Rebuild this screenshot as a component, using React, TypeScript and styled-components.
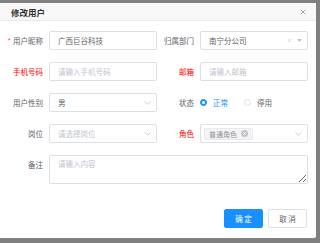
import React from "react";
import styled, { createGlobalStyle } from "styled-components";

const GlobalStyle = createGlobalStyle`
	html, body {
		margin: 0;
		padding: 0;
		background: #808080;
	}
	* {
		box-sizing: border-box;
	}
	body {
		font-family: "Noto Sans CJK SC", "Noto Sans", sans-serif;
	}
`;

const Mask = styled.div`
	width: 320px;
	height: 243px;
	padding-top: 3px;
	background: #808080;
	overflow: hidden;
`;

const Dialog = styled.div`
	width: 316px;
	height: 235px;
	background: #fff;
	display: flex;
	flex-direction: column;
	border-radius: 0 0 2px 0;
`;

const Header = styled.div`
	height: 18px;
	background: #f8f8f9;
	border-bottom: 1px solid #e8eaec;
	display: flex;
	align-items: center;
	justify-content: space-between;
	padding: 0 10px 0 11px;
	& .title {
		font-size: 8.5px;
		font-weight: 700;
		color: #303133;
	}
`;

const Body = styled.div`
	padding: 10px 8px 0 6px;
	display: grid;
	grid-template-columns: 1fr 1fr;
	row-gap: 12px;
`;

const Item = styled.div<{ $full?: boolean }>`
	display: flex;
	align-items: flex-start;
	grid-column: ${(p) => (p.$full ? "1 / -1" : "auto")};
`;

const Label = styled.label<{ $red?: boolean }>`
	width: 43px;
	flex-shrink: 0;
	padding-right: 6px;
	text-align: right;
	font-size: 7.5px;
	line-height: 19px;
	white-space: nowrap;
	color: ${(p) => (p.$red ? "#ff0000" : "#606266")};
	& .star {
		color: #ff4949;
		margin-right: 2px;
	}
`;

const TextInput = styled.input`
	flex: 1;
	min-width: 0;
	height: 19px;
	border: 1px solid #dcdfe6;
	border-radius: 2px;
	padding: 0 8px;
	font-family: inherit;
	font-size: 7.5px;
	color: #606266;
	outline: none;
	&::placeholder {
		color: #c0c4cc;
	}
`;

const Select = styled.div<{ $placeholder?: boolean }>`
	flex: 1;
	min-width: 0;
	height: 19px;
	border: 1px solid #dcdfe6;
	border-radius: 2px;
	padding: 0 5px 0 8px;
	display: flex;
	align-items: center;
	font-size: 7.5px;
	color: ${(p) => (p.$placeholder ? "#c0c4cc" : "#606266")};
	& .value {
		flex: 1;
		display: flex;
		align-items: center;
	}
	& .icons {
		display: flex;
		align-items: center;
		gap: 5px;
	}
`;

const TextArea = styled.textarea`
	flex: 1;
	height: 29px;
	border: 1px solid #dcdfe6;
	border-radius: 2px;
	padding: 2px 8px;
	font-family: inherit;
	font-size: 7.5px;
	line-height: 11px;
	color: #606266;
	resize: vertical;
	outline: none;
	&::placeholder {
		color: #c0c4cc;
	}
`;

const RadioGroup = styled.div`
	display: flex;
	align-items: center;
	height: 19px;
	gap: 16px;
`;

const Radio = styled.span<{ $checked?: boolean }>`
	display: flex;
	align-items: center;
	gap: 6px;
	font-size: 7.5px;
	color: ${(p) => (p.$checked ? "#1890ff" : "#606266")};
	& .dot {
		width: 7px;
		height: 7px;
		border-radius: 50%;
		border: 1px solid ${(p) => (p.$checked ? "#1890ff" : "#dcdfe6")};
		background: ${(p) => (p.$checked ? "#1890ff" : "#fff")};
		display: flex;
		align-items: center;
		justify-content: center;
	}
	& .dot::after {
		content: "";
		width: 3px;
		height: 3px;
		border-radius: 50%;
		background: #fff;
	}
`;

const Tag = styled.span`
	display: inline-flex;
	align-items: center;
	gap: 4px;
	height: 12px;
	padding: 0 4px;
	margin-left: -5px;
	background: #f4f4f5;
	border: 1px solid #e9e9eb;
	border-radius: 2px;
	color: #909399;
	font-size: 7px;
`;

const Footer = styled.div`
	margin-top: auto;
	padding: 0 9px 10px;
	display: flex;
	justify-content: flex-end;
	gap: 5px;
`;

const Button = styled.button<{ $primary?: boolean }>`
	width: 39px;
	height: 19px;
	border-radius: 2px;
	font-family: inherit;
	font-size: 7.5px;
	padding: 0;
	cursor: pointer;
	border: 1px solid ${(p) => (p.$primary ? "#1890ff" : "#dcdfe6")};
	background: ${(p) => (p.$primary ? "#1890ff" : "#fff")};
	color: ${(p) => (p.$primary ? "#fff" : "#606266")};
`;

const Chevron = () => (
	<svg width="7" height="4" viewBox="0 0 7 4">
		<path d="M0.5 0.5 L3.5 3.3 L6.5 0.5" fill="none" stroke="#c0c4cc" strokeWidth="0.8" />
	</svg>
);

const Cross = ({ size = 6, color = "#c0c4cc" }: { size?: number; color?: string }) => (
	<svg width={size} height={size} viewBox="0 0 6 6">
		<path d="M0.8 0.8 L5.2 5.2 M5.2 0.8 L0.8 5.2" stroke={color} strokeWidth="0.8" />
	</svg>
);

const Caret = () => (
	<svg width="5" height="3" viewBox="0 0 5 3">
		<path d="M0 0 L5 0 L2.5 3 Z" fill="#c0c4cc" />
	</svg>
);

const CircleClose = () => (
	<svg width="7" height="7" viewBox="0 0 7 7">
		<circle cx="3.5" cy="3.5" r="3.5" fill="#c0c4cc" />
		<path d="M2.2 2.2 L4.8 4.8 M4.8 2.2 L2.2 4.8" stroke="#fff" strokeWidth="0.8" />
	</svg>
);

export default function App() {
	return (
		<Mask>
			<GlobalStyle />
			<Dialog>
				<Header>
					<span className="title">修改用户</span>
					<Cross size={6} color="#909399" />
				</Header>
				<Body>
					<Item>
						<Label>
							<span className="star">*</span>用户昵称
						</Label>
						<TextInput defaultValue="广西巨谷科技" />
					</Item>
					<Item>
						<Label>归属部门</Label>
						<Select>
							<span className="value">南宁分公司</span>
							<span className="icons">
								<Cross size={5} />
								<Caret />
							</span>
						</Select>
					</Item>
					<Item>
						<Label $red>手机号码</Label>
						<TextInput placeholder="请输入手机号码" />
					</Item>
					<Item>
						<Label $red>邮箱</Label>
						<TextInput placeholder="请输入邮箱" />
					</Item>
					<Item>
						<Label>用户性别</Label>
						<Select>
							<span className="value">男</span>
							<Chevron />
						</Select>
					</Item>
					<Item>
						<Label>状态</Label>
						<RadioGroup>
							<Radio $checked>
								<span className="dot" />
								正常
							</Radio>
							<Radio>
								<span className="dot" />
								停用
							</Radio>
						</RadioGroup>
					</Item>
					<Item>
						<Label>岗位</Label>
						<Select $placeholder>
							<span className="value">请选择岗位</span>
							<Chevron />
						</Select>
					</Item>
					<Item>
						<Label $red>角色</Label>
						<Select>
							<span className="value">
								<Tag>
									普通角色
									<CircleClose />
								</Tag>
							</span>
							<Chevron />
						</Select>
					</Item>
					<Item $full>
						<Label>备注</Label>
						<TextArea placeholder="请输入内容" />
					</Item>
				</Body>
				<Footer>
					<Button $primary>确 定</Button>
					<Button>取 消</Button>
				</Footer>
			</Dialog>
		</Mask>
	);
}
